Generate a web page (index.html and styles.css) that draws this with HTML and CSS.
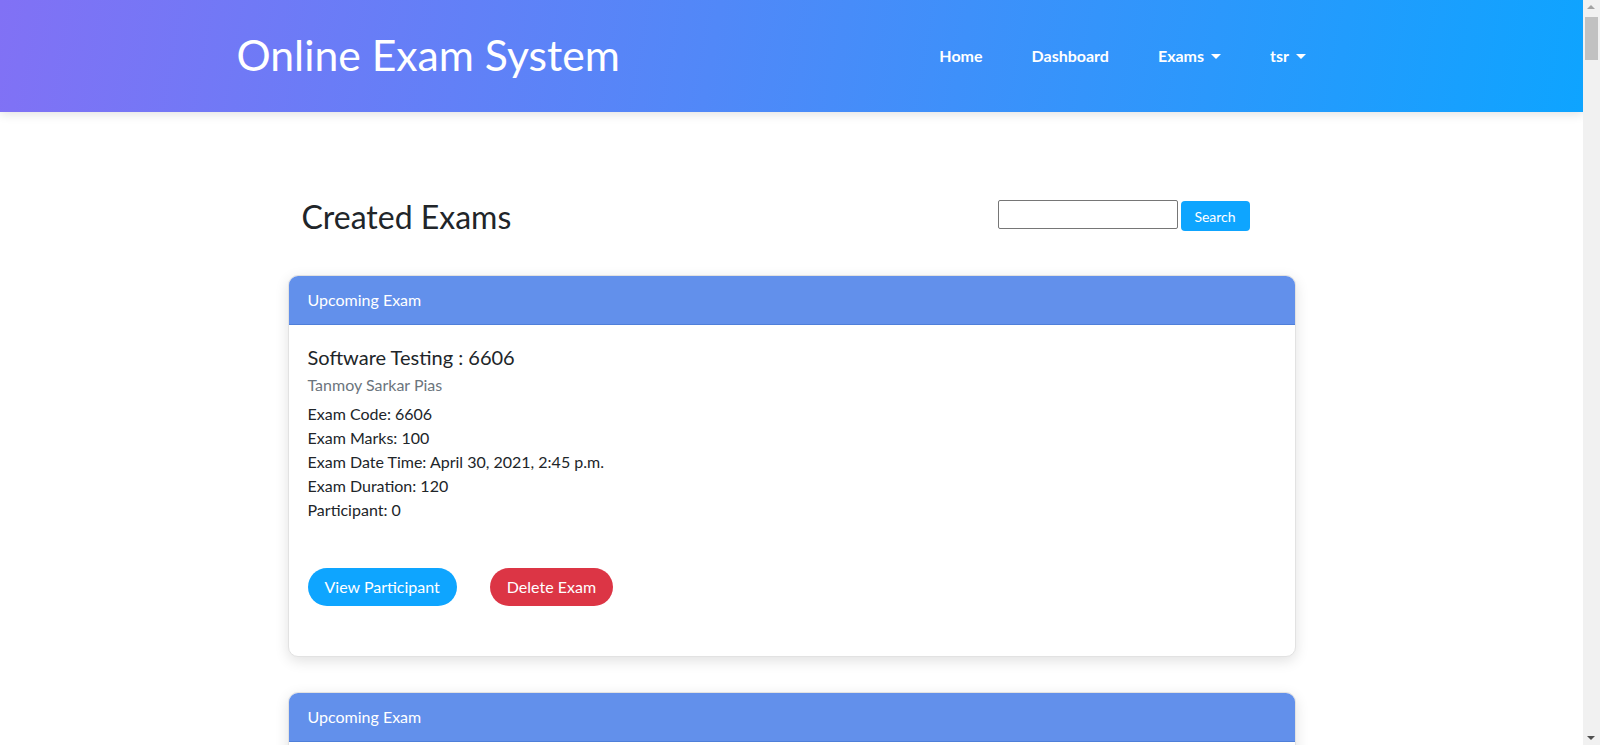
FILE: index.html
```html
<!DOCTYPE html>
<html>
<head>
<meta charset="utf-8">
<title>Online Exam System</title>
<link rel="stylesheet" href="styles.css">
</head>
<body>
<div class="page">
<header class="topbar">
  <div class="topbar-inner">
    <a class="brand" href="#">Online Exam System</a>
    <nav class="nav">
      <a class="nav-link" href="#">Home</a>
      <a class="nav-link" href="#">Dashboard</a>
      <a class="nav-link dropdown" href="#">Exams</a>
      <a class="nav-link dropdown" href="#">tsr</a>
    </nav>
  </div>
</header>
<main class="main">
  <div class="page-head">
    <h1 class="page-title">Created Exams</h1>
    <form class="search">
      <input class="search-input" type="text">
      <button class="search-btn" type="button">Search</button>
    </form>
  </div>

  <section class="card">
    <div class="card-header">Upcoming Exam</div>
    <div class="card-body">
      <h5 class="card-title">Software Testing : 6606</h5>
      <h6 class="card-subtitle">Tanmoy Sarkar Pias</h6>
      <p class="card-line">Exam Code: 6606</p>
      <p class="card-line">Exam Marks: 100</p>
      <p class="card-line">Exam Date Time: April 30, 2021, 2:45 p.m.</p>
      <p class="card-line">Exam Duration: 120</p>
      <p class="card-line">Participant: 0</p>
      <div class="actions">
        <a class="btn btn-blue" href="#">View Participant</a>
        <a class="btn btn-red" href="#">Delete Exam</a>
      </div>
    </div>
  </section>

  <section class="card">
    <div class="card-header">Upcoming Exam</div>
    <div class="card-body">
      <h5 class="card-title">Software Testing : 6606</h5>
      <h6 class="card-subtitle">Tanmoy Sarkar Pias</h6>
      <p class="card-line">Exam Code: 6606</p>
      <p class="card-line">Exam Marks: 100</p>
      <p class="card-line">Exam Date Time: April 30, 2021, 2:45 p.m.</p>
      <p class="card-line">Exam Duration: 120</p>
      <p class="card-line">Participant: 0</p>
      <div class="actions">
        <a class="btn btn-blue" href="#">View Participant</a>
        <a class="btn btn-red" href="#">Delete Exam</a>
      </div>
    </div>
  </section>
</main>
</div>
<div class="scrollbar" aria-hidden="true">
  <span class="sb-up"></span>
  <span class="sb-thumb"></span>
  <span class="sb-down"></span>
</div>
</body>
</html>
```
FILE: styles.css
```css
* { box-sizing: border-box; }
html, body { margin: 0; padding: 0; }
html { overflow: hidden; }
body {
  font-family: Lato, "Open Sans", sans-serif;
  font-size: 16px;
  line-height: 1.5;
  color: #212529;
  background: #fff;
}
a { text-decoration: none; }

.page {
  width: 1583px;
}

.topbar {
  height: 112px;
  background: linear-gradient(100deg, #8171f5 0%, #5188f8 45%, #0ea4ff 100%);
  box-shadow: 0 2px 10px rgba(0,0,0,0.12);
  position: relative;
}
.topbar-inner {
  width: 1110px;
  margin: 0 auto;
  height: 100%;
  display: flex;
  align-items: center;
  justify-content: space-between;
}
.brand {
  color: #fff;
  font-size: 42.7px;
  line-height: 1;
  margin-top: -2px;
}
.nav {
  display: flex;
  align-items: center;
  margin-right: 16px;
}
.nav-link {
  color: #fff;
  font-weight: 700;
  font-size: 16px;
  padding: 8px 24.5px;
  margin-top: -1px;
}
.dropdown::after {
  content: "";
  display: inline-block;
  margin-left: 7px;
  vertical-align: 3px;
  border-top: 5px solid #fff;
  border-left: 5px solid transparent;
  border-right: 5px solid transparent;
}

.main {
  width: 1008px;
  margin: 0 auto;
  padding-top: 82px;
}
.page-head {
  display: flex;
  align-items: flex-start;
  justify-content: space-between;
  padding: 0 46px 0 14px;
  height: 81px;
}
.page-title {
  margin: 0;
  margin-top: 4px;
  font-size: 32px;
  font-weight: 400;
  line-height: 1.2;
}
.search {
  display: flex;
  align-items: flex-start;
  gap: 3px;
  margin-top: 6px;
}
.search-input {
  width: 180px;
  height: 29px;
  border: 1px solid #767676;
  border-radius: 2px;
  padding: 1px 2px;
  margin: 0;
}
.search-btn {
  margin-top: 1px;
  height: 30px;
  width: 69px;
  border: none;
  border-radius: 4px;
  background: #0ea5ff;
  color: #fff;
  font-family: Lato, sans-serif;
  font-size: 14px;
  padding: 0;
}

.card {
  border: 1px solid #e2e2e2;
  border-radius: 10px;
  box-shadow: 0 4px 14px rgba(0,0,0,0.12);
  overflow: hidden;
  margin-bottom: 35px;
  background: #fff;
}
.card-header {
  background: #6290eb;
  color: #fff;
  height: 49px;
  padding: 0 19px;
  display: flex;
  align-items: center;
  font-size: 16px;
  border-bottom: 1px solid #4f7fd9;
}
.card-body {
  padding: 18px 19px 50px;
}
.card-title {
  margin: 0;
  font-size: 20px;
  font-weight: 400;
  line-height: 28px;
}
.card-subtitle {
  margin: 2px 0 5px;
  font-size: 16px;
  font-weight: 400;
  color: #6c757d;
  line-height: 24px;
}
.card-line {
  margin: 0;
  line-height: 24px;
  font-size: 16px;
}
.actions {
  display: flex;
  gap: 33px;
  margin-top: 46px;
}
.btn {
  display: inline-flex;
  align-items: center;
  height: 38px;
  padding: 0 17px;
  border-radius: 19px;
  color: #fff;
  font-size: 16px;
}
.btn-blue { background: #0ea5ff; }
.btn-red { background: #dc3545; }

.scrollbar {
  position: fixed;
  top: 0;
  right: 0;
  width: 17px;
  height: 745px;
  background: #f1f1f1;
}
.sb-up, .sb-down {
  position: absolute;
  left: 4px;
  width: 0;
  height: 0;
  border-left: 4px solid transparent;
  border-right: 4px solid transparent;
}
.sb-up {
  top: 5px;
  border-bottom: 4px solid #a3a3a3;
}
.sb-down {
  bottom: 5px;
  border-top: 4px solid #505050;
}
.sb-thumb {
  position: absolute;
  top: 17px;
  left: 2px;
  width: 13px;
  height: 43px;
  background: #c1c1c1;
}
```
